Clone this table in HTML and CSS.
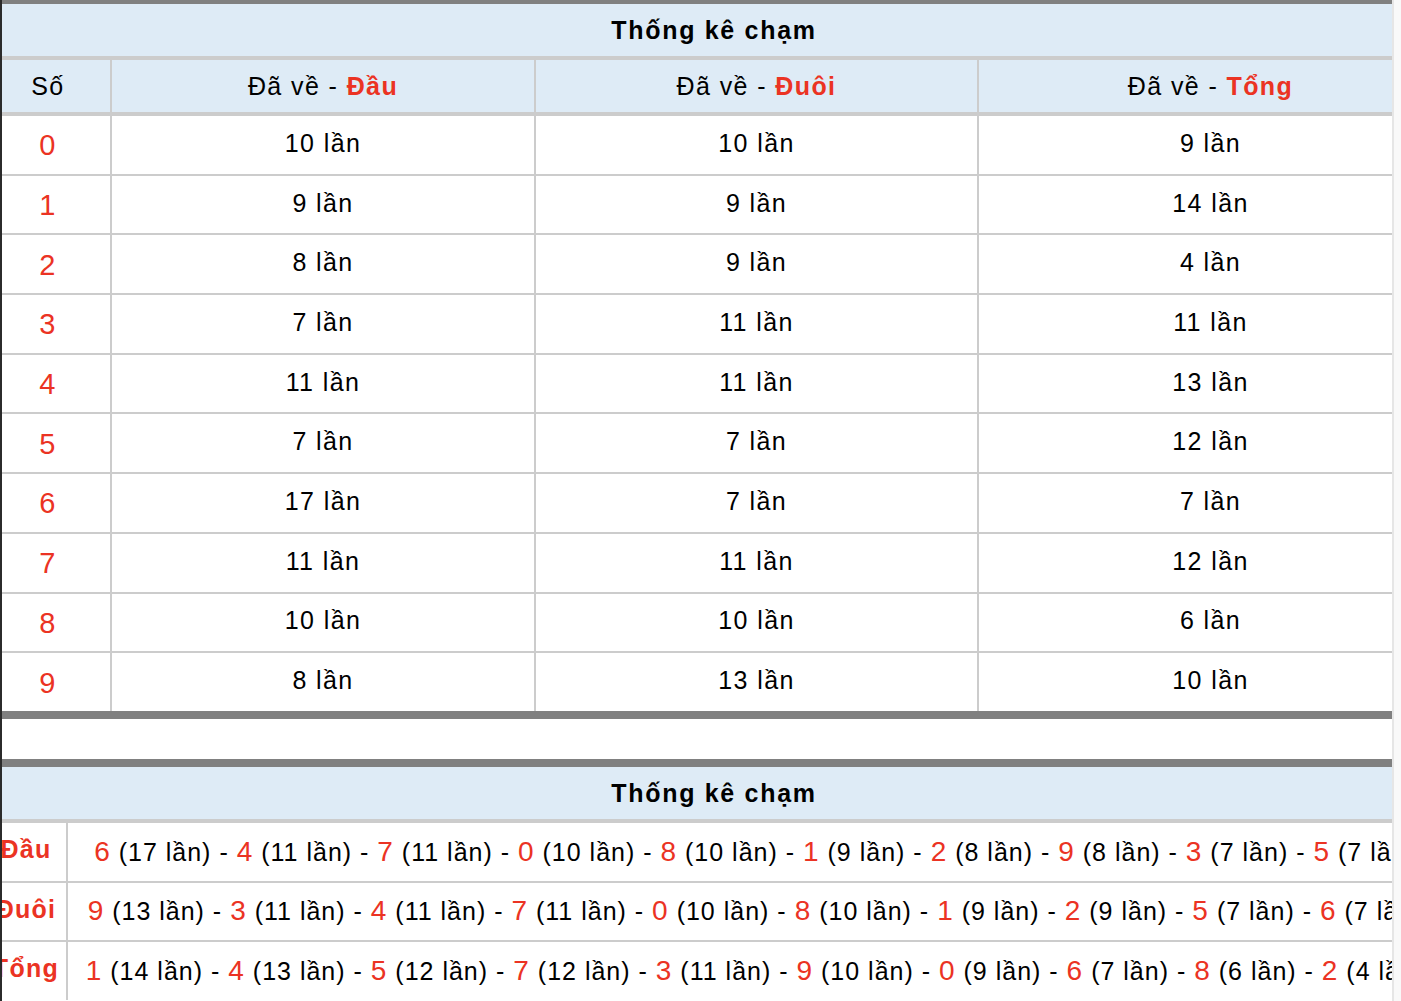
FILE: index.html
```html
<!DOCTYPE html>
<html lang="vi">
<head>
<meta charset="utf-8">
<title>Thống kê chạm</title>
<link rel="stylesheet" href="styles.css">
</head>
<body>
<div class="window">
  <div class="edge"></div>
  <div class="viewport">
    <div class="sheet">
      <section class="t1">
        <div class="title">Thống kê chạm</div>
        <div class="row head">
          <div class="cell">Số</div>
          <div class="cell"><span>Đã về - <b class="red">Đầu</b></span></div>
          <div class="cell"><span>Đã về - <b class="red">Đuôi</b></span></div>
          <div class="cell"><span>Đã về - <b class="red">Tổng</b></span></div>
        </div>
        <div class="row data"><div class="cell num">0</div><div class="cell">10 lần</div><div class="cell">10 lần</div><div class="cell">9 lần</div></div>
        <div class="row data"><div class="cell num">1</div><div class="cell">9 lần</div><div class="cell">9 lần</div><div class="cell">14 lần</div></div>
        <div class="row data"><div class="cell num">2</div><div class="cell">8 lần</div><div class="cell">9 lần</div><div class="cell">4 lần</div></div>
        <div class="row data"><div class="cell num">3</div><div class="cell">7 lần</div><div class="cell">11 lần</div><div class="cell">11 lần</div></div>
        <div class="row data"><div class="cell num">4</div><div class="cell">11 lần</div><div class="cell">11 lần</div><div class="cell">13 lần</div></div>
        <div class="row data"><div class="cell num">5</div><div class="cell">7 lần</div><div class="cell">7 lần</div><div class="cell">12 lần</div></div>
        <div class="row data"><div class="cell num">6</div><div class="cell">17 lần</div><div class="cell">7 lần</div><div class="cell">7 lần</div></div>
        <div class="row data"><div class="cell num">7</div><div class="cell">11 lần</div><div class="cell">11 lần</div><div class="cell">12 lần</div></div>
        <div class="row data"><div class="cell num">8</div><div class="cell">10 lần</div><div class="cell">10 lần</div><div class="cell">6 lần</div></div>
        <div class="row data"><div class="cell num">9</div><div class="cell">8 lần</div><div class="cell">13 lần</div><div class="cell">10 lần</div></div>
      </section>

      <section class="t2">
        <div class="title">Thống kê chạm</div>
        <div class="row2">
          <div class="cell label">Đầu</div>
          <div class="cell seq"><span class="line"><span class="n">6</span> (17 lần) - <span class="n">4</span> (11 lần) - <span class="n">7</span> (11 lần) - <span class="n">0</span> (10 lần) - <span class="n">8</span> (10 lần) - <span class="n">1</span> (9 lần) - <span class="n">2</span> (8 lần) - <span class="n">9</span> (8 lần) - <span class="n">3</span> (7 lần) - <span class="n">5</span> (7 lần)</span></div>
        </div>
        <div class="row2 mid">
          <div class="cell label">Đuôi</div>
          <div class="cell seq"><span class="line"><span class="n">9</span> (13 lần) - <span class="n">3</span> (11 lần) - <span class="n">4</span> (11 lần) - <span class="n">7</span> (11 lần) - <span class="n">0</span> (10 lần) - <span class="n">8</span> (10 lần) - <span class="n">1</span> (9 lần) - <span class="n">2</span> (9 lần) - <span class="n">5</span> (7 lần) - <span class="n">6</span> (7 lần)</span></div>
        </div>
        <div class="row2">
          <div class="cell label">Tổng</div>
          <div class="cell seq"><span class="line"><span class="n">1</span> (14 lần) - <span class="n">4</span> (13 lần) - <span class="n">5</span> (12 lần) - <span class="n">7</span> (12 lần) - <span class="n">3</span> (11 lần) - <span class="n">9</span> (10 lần) - <span class="n">0</span> (9 lần) - <span class="n">6</span> (7 lần) - <span class="n">8</span> (6 lần) - <span class="n">2</span> (4 lần)</span></div>
        </div>
      </section>
    </div>
  </div>
  <div class="scroll"></div>
</div>
</body>
</html>
```

FILE: styles.css
```css
* { box-sizing: content-box; }

html, body {
  margin: 0;
  padding: 0;
  background: #fff;
  overflow: hidden;
}

body {
  font-family: "Liberation Sans", Arial, sans-serif;
  font-size: 25px;
  letter-spacing: 1.4px;
  color: #000;
}

.window {
  display: flex;
  width: 1401px;
  height: 1001px;
}

.edge {
  width: 2px;
  flex: none;
  background: #2b2b2b;
}

.viewport {
  width: 1390px;
  flex: none;
  overflow: hidden;
}

.scroll {
  flex: 1;
  background: #f9f9f9;
  border-left: 2px solid #e6e6e6;
}

.sheet {
  width: 1456px;
  margin-left: -16px;
}

.red { color: #eb3323; }

.title {
  box-sizing: border-box;
  height: 56px;
  padding-top: 1px;
  background: #deebf6;
  border-bottom: 4px solid #cccccc;
  display: flex;
  align-items: center;
  justify-content: center;
  font-weight: bold;
  letter-spacing: 1.7px;
}

.t1 {
  border-top: 4px solid #808080;
  border-bottom: 8px solid #808080;
}

.row {
  display: grid;
  grid-template-columns: 124px 422px 441px 463px;
  column-gap: 2px;
  background: #cccccc;
}

.cell {
  display: flex;
  align-items: center;
  justify-content: center;
  background: #fff;
  white-space: nowrap;
}

.head {
  height: 52px;
  border-bottom: 4px solid #cccccc;
}

.head .cell {
  background: #deebf6;
}

.data {
  height: 57.7px;
}

.data .cell {
  padding-bottom: 3px;
}

.data .num {
  padding-bottom: 0;
  padding-top: 2px;
}

.data + .data {
  border-top: 2px solid #cccccc;
}

.num {
  color: #eb3323;
  font-size: 29px;
}

.t2 {
  margin-top: 40px;
  border-top: 8px solid #808080;
}

.row2 {
  display: grid;
  grid-template-columns: 80px 1374px;
  column-gap: 2px;
  background: #cccccc;
  height: 58px;
}

.row2.mid {
  height: 57px;
  border-top: 2px solid #cccccc;
  border-bottom: 2px solid #cccccc;
}

.label {
  color: #eb3323;
  font-weight: bold;
  letter-spacing: 1.3px;
  padding-bottom: 4px;
}

.seq {
  letter-spacing: 1px;
}

.line {
  white-space: nowrap;
  flex: none;
}

.n {
  color: #eb3323;
  font-size: 28px;
}
```
